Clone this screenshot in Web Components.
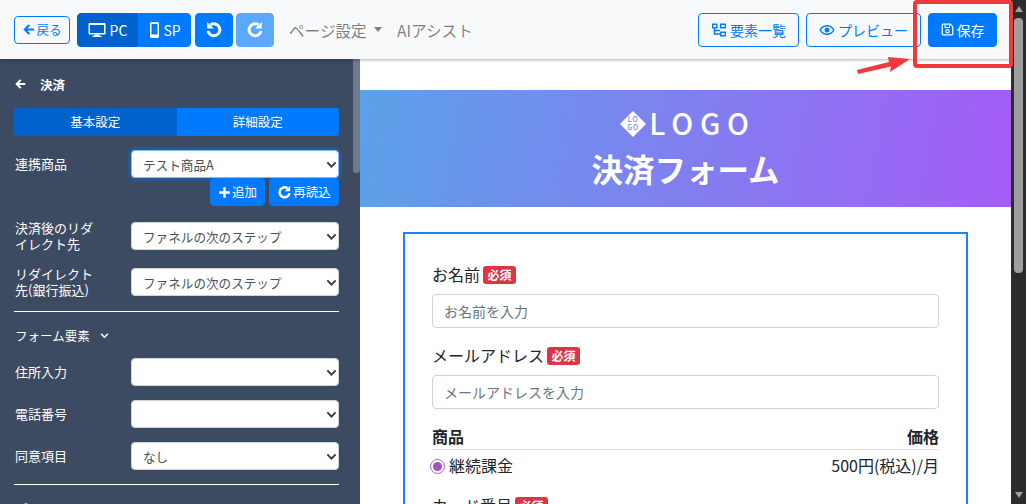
<!DOCTYPE html>
<html lang="ja">
<head>
<meta charset="utf-8">
<title>決済フォーム</title>
<style>
    html, body { margin: 0; height: 100%; overflow: hidden; background: #fff; }
    body { font-family: "Noto Sans CJK JP", "Noto Sans", sans-serif; }
</style>
</head>
<body>
<editor-app></editor-app>

<script>
const ICONS = {
    back: '<path d="M15 8H4M9 2.500 3.500 8 9 13.500" fill="none" stroke="currentColor" stroke-width="2.600"/>',
    desktop: '<path d="M1.500 2h15a1 1 0 0 1 1 1v9.500a1 1 0 0 1-1 1h-15a1 1 0 0 1-1-1V3a1 1 0 0 1 1-1zm.5 2v8h14V4z" fill="currentColor" fill-rule="evenodd"/><path d="M6.500 13.500h5l.4 1.600h1.600v1h-9v-1h1.600z" fill="currentColor"/>',
    mobile: '<path d="M3.500 0h6A1.500 1.500 0 0 1 11 1.500v13A1.500 1.500 0 0 1 9.500 16h-6A1.500 1.500 0 0 1 2 14.500v-13A1.500 1.500 0 0 1 3.500 0zM3.500 2v10.500h6V2z" fill="currentColor" fill-rule="evenodd"/>',
    undo: '<path d="M5.500 3.800A6 6 0 1 1 3 10" fill="none" stroke="currentColor" stroke-width="3"/><path d="M2.200 1v6.500h6.500z" fill="currentColor"/>',
    redo: '<path d="M12.500 3.800A6 6 0 1 0 15 10" fill="none" stroke="currentColor" stroke-width="3"/><path d="M15.800 1v6.500H9.300z" fill="currentColor"/>',
    tree: '<path d="M1 1.500h5.500v5H1zM2.400 2.900v2.200h2.700V2.900zM9 1.500h6v5H9zM10.400 2.900v2.200h3.200V2.900zM9 9.500h6v5H9zM10.400 10.900v2.200h3.200v-2.200z" fill="currentColor" fill-rule="evenodd"/><path d="M3.500 6.500V12H9M3.500 8.500H9" fill="none" stroke="currentColor" stroke-width="1.500"/>',
    eye: '<path d="M8 3C4.500 3 1.700 5.300.5 8c1.200 2.700 4 5 7.500 5s6.300-2.300 7.500-5C14.300 5.300 11.500 3 8 3zm0 8.600C5.300 11.600 3.100 10 2 8c1.100-2 3.300-3.600 6-3.600S12.900 6 14 8c-1.100 2-3.300 3.600-6 3.600z" fill="currentColor"/><circle cx="8" cy="8" r="2.500" fill="currentColor"/>',
    save: '<path d="M2.500 1.500h9l3 3v9a1 1 0 0 1-1 1h-11a1 1 0 0 1-1-1v-11a1 1 0 0 1 1-1z" fill="none" stroke="currentColor" stroke-width="1.500"/><path d="M5 2v3.500h5.500V2" fill="none" stroke="currentColor" stroke-width="1.300"/><circle cx="8" cy="10" r="2" fill="none" stroke="currentColor" stroke-width="1.500"/>',
    plus: '<path d="M8 1.500v13M1.500 8h13" fill="none" stroke="currentColor" stroke-width="3"/>',
    chevron: '<path d="M2 5 8 11l6-6" fill="none" stroke="currentColor" stroke-width="2.800"/>'
};

class UiIcon extends HTMLElement {
    connectedCallback() {
        const name = this.getAttribute("name");
        const w = this.getAttribute("w") || 16;
        const h = this.getAttribute("h") || 16;
        const box = this.getAttribute("box") || "0 0 16 16";
        this.attachShadow({ mode: "open" }).innerHTML = `
        <style>
            :host { display: inline-flex; }
            svg { display: block; }
        </style>
        <svg width="${w}" height="${h}" viewBox="${box}">${ICONS[name]}</svg>`;
    }
}
customElements.define("ui-icon", UiIcon);

// shared button look, used by the toolbar and the side panel
class UiButton extends HTMLElement {
    constructor() {
        super();
        this.attachShadow({ mode: "open" }).innerHTML = `
        <style>
            :host {
                display: inline-flex;
                align-items: center;
                justify-content: center;
                box-sizing: border-box;
                height: 34px;
                gap: 3px;
                border-radius: 4px;
                font-size: 14px;
                line-height: 20px;
                background: #007bff;
                color: #fff;
                border: 1px solid #007bff;
                white-space: nowrap;
            }
            :host([variant="outline"]) { background: #fff0; color: #007bff; }
            :host([variant="dark"]) { background: #0062cc; border-color: #0062cc; }
            :host([variant="faded"]) { background: #5aa9ff; border-color: #5aa9ff; }
        </style>
        <slot></slot>`;
    }
}
customElements.define("ui-button", UiButton);

class EditorToolbar extends HTMLElement {
    constructor() {
        super();
        this.attachShadow({ mode: "open" }).innerHTML = `
        <style>
            :host {
                display: flex;
                align-items: center;
                box-sizing: border-box;
                height: 59px;
                padding: 0 14px;
                background: #f8f9fa;
                box-shadow: 0 1px 3px rgba(0,0,0,.3);
                position: relative;
                z-index: 2;
            }
            .back { width: 56px; height: 28px; font-size: 12.500px; margin-right: 7px; gap: 1px; }
            .group { display: flex; margin-right: 4px; }
            .group .pc { width: 61px; border-radius: 4px 0 0 4px; gap: 4px; }
            .group .sp { width: 53px; border-radius: 0 4px 4px 0; gap: 2px; }
            .hist { width: 38px; margin-right: 3px; }
            .link { color: rgba(0,0,0,.5); font-size: 15.600px; line-height: 20px; }
            .menu { margin-left: 12px; display: flex; align-items: center; gap: 7px; width: 96px; }
            .caret { border-top: 5px solid rgba(0,0,0,.5); border-left: 4.500px solid transparent; border-right: 4.500px solid transparent; }
            .spacer { flex: 1; }
            .list { width: 101px; margin-right: 7px; }
            .preview { width: 115px; margin-right: 7px; }
            .save { width: 69px; }
        </style>
        <ui-button class="back" variant="outline"><ui-icon name="back" w="13" h="13"></ui-icon>戻る</ui-button>
        <div class="group">
            <ui-button class="pc" variant="dark"><ui-icon name="desktop" w="18" h="18" box="0 0 18 18"></ui-icon>PC</ui-button>
            <ui-button class="sp"><ui-icon name="mobile" w="13" h="16" box="0 0 13 16"></ui-icon>SP</ui-button>
        </div>
        <ui-button class="hist"><ui-icon name="undo" w="18" h="18" box="0 0 18 18"></ui-icon></ui-button>
        <ui-button class="hist" variant="faded"><ui-icon name="redo" w="18" h="18" box="0 0 18 18"></ui-icon></ui-button>
        <span class="link menu">ページ設定<span class="caret"></span></span>
        <span class="link" style="margin-left:12px">AIアシスト</span>
        <span class="spacer"></span>
        <ui-button class="list" variant="outline"><ui-icon name="tree" w="16" h="16"></ui-icon>要素一覧</ui-button>
        <ui-button class="preview" variant="outline"><ui-icon name="eye" w="16" h="16"></ui-icon>プレビュー</ui-button>
        <ui-button class="save"><ui-icon name="save" w="13" h="13"></ui-icon>保存</ui-button>`;
    }
}
customElements.define("editor-toolbar", EditorToolbar);

class SelectRow extends HTMLElement {
    connectedCallback() {
        const value = this.getAttribute("value") || "";
        const focus = this.hasAttribute("focus") ? "focus" : "";
        this.attachShadow({ mode: "open" }).innerHTML = `
        <style>
            :host {
                display: grid;
                grid-template-columns: 116px 208px;
                align-items: center;
                color: #fff;
                font-size: 13px;
                line-height: 16px;
                padding-left: 1px;
            }
            .label { padding-right: 30px; }
            .field {
                position: relative;
                box-sizing: border-box;
                height: 28px;
                padding: 0 11px;
                background: #fff;
                border: 1px solid #ced4da;
                border-radius: 4px;
                color: #495057;
                font-size: 12.600px;
                line-height: 28px;
            }
            .field.focus { border-color: #80bdff; box-shadow: 0 0 0 3px rgba(0,123,255,.3); }
            ui-icon { position: absolute; right: 1px; top: 8px; color: #343a40; }
        </style>
        <div class="label"><slot></slot></div>
        <div class="field ${focus}">${value}<ui-icon name="chevron" w="11" h="11"></ui-icon></div>`;
    }
}
customElements.define("select-row", SelectRow);

class SidePanel extends HTMLElement {
    constructor() {
        super();
        this.attachShadow({ mode: "open" }).innerHTML = `
        <style>
            :host {
                display: block;
                box-sizing: border-box;
                position: relative;
                width: 360px;
                padding: 15px 21px 0 14px;
                background: #3c4a62;
                color: #fff;
                font-size: 13px;
                overflow: hidden;
            }
            .head { display: flex; align-items: center; height: 20px; gap: 14px; font-weight: 700; font-size: 12.500px; }
            .tabs { display: flex; margin-top: 14px; height: 28px; line-height: 28px; text-align: center; font-size: 12.500px; }
            .tabs div { flex: 1; background: #007bff; border-radius: 0 3px 3px 0; }
            .tabs div:first-child { background: #0062cc; border-radius: 3px 0 0 3px; }
            .first { margin-top: 14px; }
            .actions { display: flex; justify-content: flex-end; gap: 4px; }
            .actions ui-button { height: 28px; font-size: 12.500px; gap: 1px; }
            .second { margin-top: 14px; }
            .third { margin-top: 14px; }
            hr { margin: 13px 0 0; border: 0; border-top: 1px solid #fff; }
            .sub { display: flex; align-items: center; gap: 10px; margin-top: 13px; height: 20px; font-size: 12.500px; padding-left: 1px; }
            .sub + select-row { margin-top: 13px; }
            .gap { margin-top: 14px; }
            .last { margin-top: 14px; padding-left: 1px; font-size: 12.500px; }
            .bar { position: absolute; right: 0; top: 0; bottom: 0; width: 7px; background: #3c4a62; }
            .thumb { height: 114px; background: #6f7a8f; border-radius: 0 0 3px 3px; }
        </style>
        <div class="head"><ui-icon name="back" w="12" h="12"></ui-icon>決済</div>
        <div class="tabs"><div>基本設定</div><div>詳細設定</div></div>
        <select-row class="first" value="テスト商品A" focus>連携商品</select-row>
        <div class="actions">
            <ui-button style="width:55px"><ui-icon name="plus" w="13" h="13"></ui-icon>追加</ui-button>
            <ui-button style="width:70px"><ui-icon name="redo" w="15" h="15" box="0 0 18 18"></ui-icon>再読込</ui-button>
        </div>
        <select-row class="second" value="ファネルの次のステップ">決済後のリダイレクト先</select-row>
        <select-row class="third" value="ファネルの次のステップ">リダイレクト先(銀行振込)</select-row>
        <hr>
        <div class="sub">フォーム要素<ui-icon name="chevron" w="9" h="9"></ui-icon></div>
        <select-row>住所入力</select-row>
        <select-row class="gap">電話番号</select-row>
        <select-row class="gap" value="なし">同意項目</select-row>
        <hr style="margin-top:14px">
        <div class="last">デザイン</div>
        <div class="bar"><div class="thumb"></div></div>`;
    }
}
customElements.define("side-panel", SidePanel);

class FormField extends HTMLElement {
    connectedCallback() {
        const ph = this.getAttribute("placeholder");
        this.attachShadow({ mode: "open" }).innerHTML = `
        <style>
            :host { display: block; font-size: 16px; line-height: 22px; color: #212529; }
            .label { display: flex; align-items: center; gap: 3px; height: 22px; }
            .text { margin-top: -2px; }
            .badge {
                width: 33px;
                height: 18px;
                border-radius: 3px;
                background: #dc3545;
                color: #fff;
                font-size: 12px;
                font-weight: 700;
                line-height: 18px;
                text-align: center;
            }
            .input {
                box-sizing: border-box;
                height: 34px;
                margin-top: 8px;
                padding: 0 11px;
                border: 1px solid #ced4da;
                border-radius: 4px;
                color: #6c757d;
                font-size: 14px;
                line-height: 32px;
            }
        </style>
        <div class="label"><span class="text"><slot></slot></span><span class="badge">必須</span></div>
        ${ph ? `<div class="input">${ph}</div>` : ""}`;
    }
}
customElements.define("form-field", FormField);

class FormPreview extends HTMLElement {
    constructor() {
        super();
        this.attachShadow({ mode: "open" }).innerHTML = `
        <style>
            :host { display: block; flex: 1; background: #fff; padding-top: 31px; min-width: 0; overflow: hidden; }
            .hero {
                height: 117px;
                background: linear-gradient(100deg, #5ba2e9, #a55cf6);
                color: #fff;
                text-align: center;
            }
            .logo { display: flex; justify-content: center; align-items: center; padding: 20px 0 0 5px; height: 28px; gap: 3px; font-size: 29px; font-weight: 500; letter-spacing: 6.800px; line-height: 28px; }
            .logo > span { margin-top: -4px; }
            .mark { position: relative; width: 26px; height: 26px; letter-spacing: 1px; }
            .mark svg { display: block; }
            .mark span { position: absolute; left: 0; right: 0; color: #7d83ea; font-size: 7px; line-height: 7px; }
            h1 { margin: 8px 0 0; font-size: 31.500px; line-height: 44px; font-weight: 700; }
            .card {
                box-sizing: border-box;
                margin: 25px 43px 0;
                height: 400px;
                padding: 30px 27px 0;
                border: 2px solid #1a82ff;
            }
            form-field + form-field { margin-top: 17px; }
            .thead { display: flex; justify-content: space-between; margin-top: 16px; padding-bottom: 2px; border-bottom: 1px solid #dee2e6; font-weight: 700; font-size: 16px; line-height: 22px; color: #212529; }
            .trow { display: flex; align-items: center; justify-content: space-between; height: 32px; font-size: 16px; color: #212529; }
            .trow span { line-height: 22px; }
            .price { margin-top: -2px; }
            .plan { display: flex; align-items: center; gap: 4px; margin-left: -2px; }
            .plan b { font-weight: 400; margin-top: -2px; }
            .radio { box-sizing: border-box; width: 15px; height: 15px; border: 1.500px solid #b05ac8; border-radius: 50%; padding: 2px; background-clip: content-box; background-color: #a94fc4; }
        </style>
        <div class="hero">
            <div class="logo">
                <div class="mark">
                    <svg width="26" height="26" viewBox="0 0 26 26"><path d="M13 0 26 13 13 26 0 13z" fill="#fff"/></svg>
                    <span style="top:5px">LO</span><span style="top:13px">GO</span>
                </div>
                <span>LOGO</span>
            </div>
            <h1>決済フォーム</h1>
        </div>
        <div class="card">
            <form-field placeholder="お名前を入力">お名前</form-field>
            <form-field placeholder="メールアドレスを入力">メールアドレス</form-field>
            <div class="thead"><span>商品</span><span>価格</span></div>
            <div class="trow">
                <span class="plan"><span class="radio"></span><b>継続課金</b></span>
                <span class="price">500円(税込)/月</span>
            </div>
            <form-field style="margin-top:13px">カード番号</form-field>
        </div>`;
    }
}
customElements.define("form-preview", FormPreview);

class FakeScrollbar extends HTMLElement {
    constructor() {
        super();
        this.attachShadow({ mode: "open" }).innerHTML = `
        <style>
            :host {
                display: flex;
                flex-direction: column;
                align-items: center;
                width: 15px;
                height: 100%;
                background: #2c2c2c;
                position: relative;
                z-index: 3;
            }
            .up { margin-top: 6px; border-bottom: 6px solid #a0a0a0; border-left: 4.500px solid transparent; border-right: 4.500px solid transparent; }
            .thumb { width: 9px; height: 255px; margin-top: 6px; background: #9e9e9e; border-radius: 4px; }
            .down { margin-top: auto; margin-bottom: 6px; border-top: 6px solid #a0a0a0; border-left: 4.500px solid transparent; border-right: 4.500px solid transparent; }
        </style>
        <div class="up"></div><div class="thumb"></div><div class="down"></div>`;
    }
}
customElements.define("fake-scrollbar", FakeScrollbar);

// red highlight box and arrow drawn over the screenshot
class ScreenNote extends HTMLElement {
    constructor() {
        super();
        this.attachShadow({ mode: "open" }).innerHTML = `
        <style>
            :host { position: absolute; inset: 0; z-index: 4; pointer-events: none; }
            .box { position: absolute; left: 913px; top: 0; width: 100px; height: 68px; box-sizing: border-box; border: 4px solid #f0393b; border-radius: 4px; }
            svg { position: absolute; left: 850px; top: 50px; }
        </style>
        <div class="box"></div>
        <svg width="70" height="30" viewBox="0 0 70 30"><path d="M7 20 8 24 41 16.500 40 22 60 9 38 7 39 12z" fill="#f0393b"/></svg>`;
    }
}
customElements.define("screen-note", ScreenNote);

class EditorApp extends HTMLElement {
    constructor() {
        super();
        this.attachShadow({ mode: "open" }).innerHTML = `
        <style>
            :host { display: flex; position: relative; width: 1026px; height: 504px; overflow: hidden; }
            .page { flex: 1; min-width: 0; display: flex; flex-direction: column; }
            .body { flex: 1; min-height: 0; display: flex; }
        </style>
        <div class="page">
            <editor-toolbar></editor-toolbar>
            <div class="body">
                <side-panel></side-panel>
                <form-preview></form-preview>
            </div>
        </div>
        <fake-scrollbar></fake-scrollbar>
        <screen-note></screen-note>`;
    }
}
customElements.define("editor-app", EditorApp);
</script>
</body>
</html>
